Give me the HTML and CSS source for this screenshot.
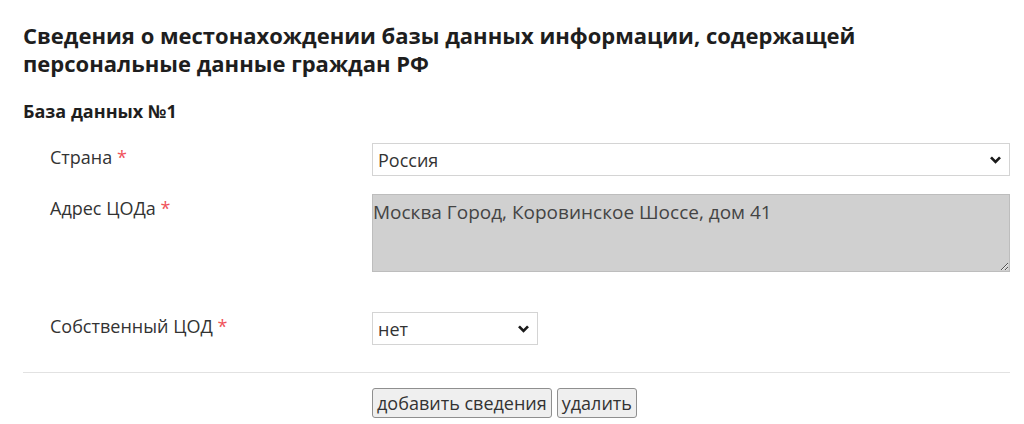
FILE: index.html
```html
<!DOCTYPE html>
<html lang="ru">
  <head>
    <meta charset="UTF-8" />
    <title>Сведения о местонахождении базы данных</title>
    <link rel="stylesheet" href="styles.css">
  </head>
  <body>
    <div class="page">
      <h1>Сведения о местонахождении базы данных информации, содержащей персональные данные граждан РФ</h1>

      <h2>База данных №1</h2>

      <div class="form">
        <div class="row">
          <label class="lbl">Страна <span class="req">*</span></label>
          <div class="ctl sel-wrap wide">
            <select class="sel">
              <option>Россия</option>
            </select>
            <svg class="chev" width="11" height="8" viewBox="0 0 11 8"><path d="M1 1.4 5.5 5.9 10 1.4" fill="none" stroke="#1a1a1a" stroke-width="2.7"/></svg>
          </div>
        </div>

        <div class="row row-tall">
          <label class="lbl">Адрес ЦОДа <span class="req">*</span></label>
          <div class="ctl">
            <textarea class="addr" readonly>Москва Город, Коровинское Шоссе, дом 41</textarea>
          </div>
        </div>

        <div class="row">
          <label class="lbl">Собственный ЦОД <span class="req">*</span></label>
          <div class="ctl sel-wrap short">
            <select class="sel">
              <option>нет</option>
              <option>да</option>
            </select>
            <svg class="chev" width="11" height="8" viewBox="0 0 11 8"><path d="M1 1.4 5.5 5.9 10 1.4" fill="none" stroke="#1a1a1a" stroke-width="2.7"/></svg>
          </div>
        </div>
      </div>

      <hr />

      <div class="actions">
        <button>добавить сведения</button>
        <button>удалить</button>
      </div>
    </div>
  </body>
</html>
```

FILE: styles.css
```css
:root {
  font-family: "Open Sans", "Noto Sans", sans-serif;
  font-size: 18px;
  color: #333;
}
body {
  margin: 0;
  background: #fff;
}
.page {
  padding: 21px 14px 0 18px;
}
h1 {
  margin: 0 0 22px 5px;
  font-size: 22px;
  line-height: 28px;
  font-weight: 700;
  color: #1e1e1e;
  max-width: 880px;
}
h2 {
  margin: 0 0 20px 5px;
  font-size: 18px;
  line-height: 24px;
  font-weight: 700;
  color: #1e1e1e;
}
.form {
  display: flex;
  flex-direction: column;
  gap: 18px;
}
.row {
  display: grid;
  grid-template-columns: 354px 1fr;
}
.row-tall {
  margin-bottom: 22px;
}
.lbl {
  padding: 2px 0 0 32px;
  line-height: 24px;
  color: #333;
}
.req {
  color: #f0525a;
}
.sel-wrap {
  position: relative;
}
.sel-wrap.short {
  width: 166px;
}
.sel {
  appearance: none;
  -webkit-appearance: none;
  width: 100%;
  height: 33px;
  margin: 0;
  padding: 0 24px 0 5px;
  font: inherit;
  color: #333;
  background: #fff;
  border: 1px solid #d4d4d4;
  border-radius: 0;
}
.chev {
  position: absolute;
  right: 9px;
  top: 13px;
  pointer-events: none;
}
.addr {
  display: block;
  box-sizing: border-box;
  width: 100%;
  height: 78px;
  margin: 0;
  padding: 5px 0;
  font: inherit;
  font-size: 19px;
  line-height: 24px;
  color: #444;
  background: #d0d0d0;
  border: 1px solid #bdbdbd;
  border-radius: 0;
  outline: none;
}
hr {
  margin: 27px 0 15px 5px;
  border: none;
  border-top: 1px solid #e2e2e2;
}
.actions {
  display: flex;
  gap: 5px;
  padding-left: 354px;
}
button {
  height: 30px;
  padding: 0 4px;
  font: inherit;
  color: #333;
  background: #efefef;
  border: 1px solid #8f8f8f;
  border-radius: 3px;
}
```
